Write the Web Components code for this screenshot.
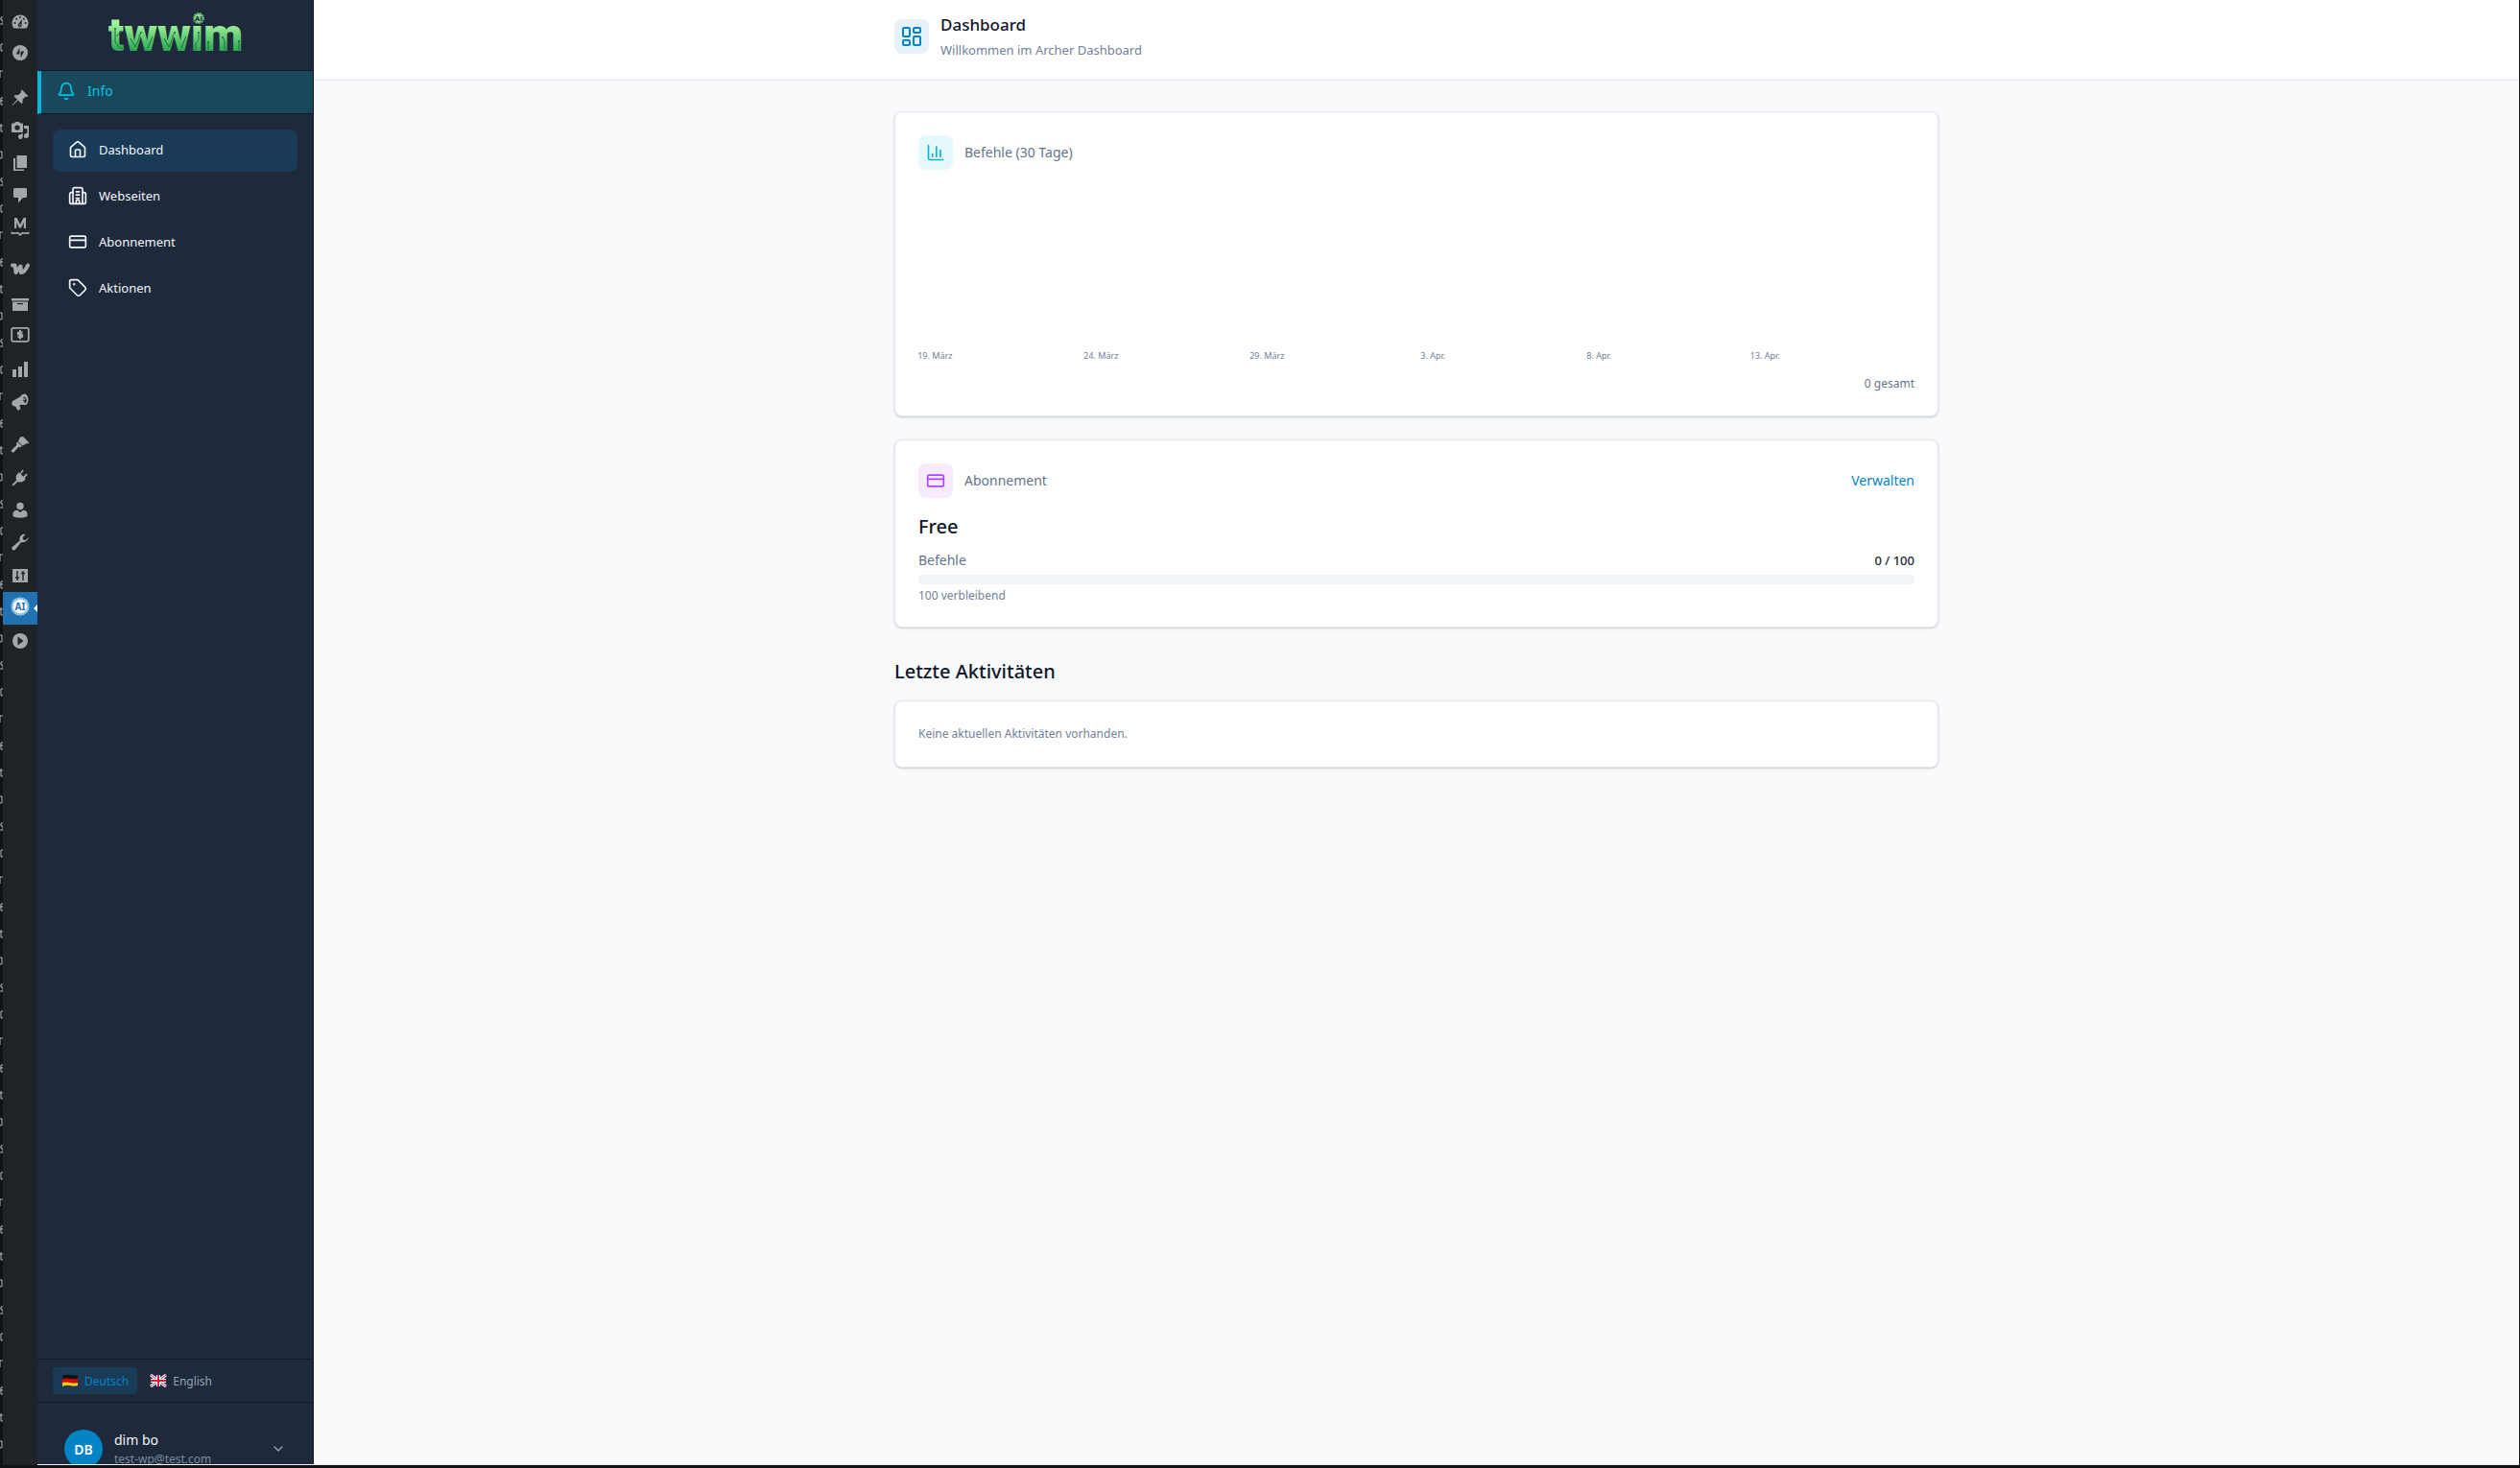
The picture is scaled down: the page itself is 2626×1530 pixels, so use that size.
<!DOCTYPE html>
<html lang="de">
<head>
<meta charset="utf-8">
<title>Dashboard</title>
<style>
	html, body {
		height: 100%;
		margin: 0;
	}
	body {
		font-family: "Noto Sans", "Open Sans", sans-serif;
		background: #111214;
		overflow: hidden;
	}
</style>
</head>
<body>

<archer-app>
	<admin-rail slot="rail"></admin-rail>
	<side-bar slot="sidebar"></side-bar>
	<page-header slot="header" heading="Dashboard" text="Willkommen im Archer Dashboard"></page-header>

	<dash-card icon="chart" heading="Befehle (30 Tage)">
		<command-chart></command-chart>
	</dash-card>
	<dash-card icon="card" heading="Abonnement">
		<a slot="action" href="#abonnement">Verwalten</a>
		<plan-usage plan="Free" used="0" total="100"></plan-usage>
	</dash-card>
	<activity-list></activity-list>
</archer-app>

<script>
// line icons, drawn on a 24 grid
const icons = {
	bell: '<path d="M10.3 21a1.94 1.94 0 0 0 3.4 0"/><path d="M3.3 15.3A1 1 0 0 0 4 17h16a1 1 0 0 0 .7-1.7C19.4 14 18 12.5 18 8A6 6 0 0 0 6 8c0 4.500-1.400 6-2.700 7.300"/>',
	home: '<path d="M15 21v-8a1 1 0 0 0-1-1h-4a1 1 0 0 0-1 1v8"/><path d="M3 10a2 2 0 0 1 .7-1.500l7-6a2 2 0 0 1 2.600 0l7 6A2 2 0 0 1 21 10v9a2 2 0 0 1-2 2H5a2 2 0 0 1-2-2z"/>',
	building: '<path d="M6 22V4a2 2 0 0 1 2-2h8a2 2 0 0 1 2 2v18Z"/><path d="M6 8H4a2 2 0 0 0-2 2v10a2 2 0 0 0 2 2h2"/><path d="M18 8h2a2 2 0 0 1 2 2v10a2 2 0 0 1-2 2h-2"/><path d="M10 7h4M10 11h4M10 15h4"/><path d="M10 22v-3a2 2 0 0 1 4 0v3"/>',
	card: '<rect x="2" y="5" width="20" height="14" rx="2"/><path d="M2 10h20"/>',
	tag: '<path d="M12.600 2.600A2 2 0 0 0 11.200 2H4a2 2 0 0 0-2 2v7.200a2 2 0 0 0 .6 1.400l8.700 8.700a2.400 2.400 0 0 0 3.400 0l6.600-6.600a2.400 2.400 0 0 0 0-3.400z"/><circle cx="7.500" cy="7.500" r=".5" fill="currentColor"/>',
	layout: '<rect x="3" y="3" width="7" height="9" rx="1"/><rect x="14" y="3" width="7" height="5" rx="1"/><rect x="14" y="12" width="7" height="9" rx="1"/><rect x="3" y="16" width="7" height="5" rx="1"/>',
	chart: '<path d="M3 3v16a2 2 0 0 0 2 2h16"/><path d="M18 17V9M13 17V5M8 17v-3"/>',
	chevron: '<path d="m6 9 6 6 6-6"/>'
};

const icon = (name, size = 20, stroke = 2) => `
	<svg width="${size}" height="${size}" viewBox="0 0 24 24" fill="none" stroke="currentColor"
		stroke-width="${stroke}" stroke-linecap="round" stroke-linejoin="round" aria-hidden="true">${icons[name]}</svg>`;

// solid icons of the admin rail, drawn on a 20 grid. null = separator
const railItems = [
	['Dashboard', '<path d="M3.500 16.500A8.500 8.500 0 1 1 16.500 16.500z"/><g fill="#1d2327"><circle cx="4.500" cy="11" r="1"/><circle cx="6.200" cy="6.700" r="1"/><circle cx="10" cy="5" r="1"/><circle cx="13.800" cy="6.700" r="1"/><circle cx="15.500" cy="11" r="1"/><path d="M11.800 7l-.2 6.500a1.900 1.900 0 1 1-3.300-1.500z"/></g><circle cx="10" cy="13" r=".8"/>'],
	['Jetpack', '<circle cx="10" cy="8" r="8"/><path fill="#1d2327" d="M9.400 2.800v6.600H5.800zM10.600 13.200V6.600h3.600z"/>'],
	null,
	['Beiträge', '<path d="M11.800 1.500l6.700 6.700-1.600.7-1.200-.3-3.200 3.200c.4 1.700.2 3.200-.8 4.400L7.800 12.500 2 18l-.5-.5L7 11.700 3.400 8c1.300-.9 2.800-1.100 4.400-.7L11 4.200l-.3-1.300z"/>'],
	['Medien', '<path d="M2 2.500h2L5 1h4l1 1.500h2a1 1 0 0 1 1 1V11a1 1 0 0 1-1 1H2a1 1 0 0 1-1-1V3.500a1 1 0 0 1 1-1z"/><circle cx="7" cy="7" r="2.600" fill="#1d2327"/><path d="M14 5h5v10.500a2.500 2.500 0 1 1-1.700-2.400V8H14zM11 13.300h1.800v3.200a2.400 2.400 0 1 1-1.800-2.300z"/>'],
	['Seiten', '<path d="M6.500 2H17v13H6.500z"/><path d="M3 5h2v11.500h9V18H3z"/>'],
	['Kommentare', '<path d="M4.500 2h11A1.500 1.500 0 0 1 17 3.500v7a1.500 1.500 0 0 1-1.500 1.500H13l-5 5.500V12H4.500A1.500 1.500 0 0 1 3 10.500v-7A1.500 1.500 0 0 1 4.500 2z"/>'],
	['MailPoet', '<path d="M4 10V-1h2.600L10 6l3.400-7H16v11h-2.200V3.800L11 9.500H9L6.200 3.800V10z"/><path d="M.5 13.500c2.500 1.600 5 .2 7 .4 1.400.2 2 .9 2.500 1.800.5-.9 1.100-1.600 2.500-1.800 2-.2 4.500 1.200 7-.4v2c-2.500 1.200-5 .2-7 .4-1.500.2-1.700 2-2.500 2s-1-1.800-2.500-2c-2-.2-4.500.8-7-.4z"/>'],
	null,
	['WooCommerce', '<path fill="none" stroke="currentColor" stroke-width="4" stroke-linejoin="round" stroke-linecap="round" d="M2 3.500h2.500L5.500 11l5-6.500.5 6.500c3 0 5-3 7-7.500"/>'],
	['Produkte', '<path d="M1 4h18v2.500H1zM2 7.500h16V17H2z"/><path fill="#1d2327" d="M7 9h6v1.200H7z"/>'],
	['Zahlungen', '<rect x="1.200" y=".8" width="17.600" height="14" rx="1.500" fill="none" stroke="currentColor" stroke-width="1.800"/><path fill="none" stroke="currentColor" stroke-width="2" d="M12.600 5.400H8.800a1.200 1.200 0 0 0 0 2.400h2.400a1.200 1.200 0 0 1 0 2.400H7.400M10 3v9.500"/>'],
	['Statistiken', '<path d="M2 10h4v8H2zM8 7h4v11H8zM14 2h4v16h-4z"/>'],
	['Marketing', '<path fill-rule="evenodd" d="M10 4.500C12 2 14 .8 16 2c3 2 3.200 7.500 1 10.200-1 1.200-3 .8-5 .5l-2.700.5 1.200 4.300-3 1.200L5 14.500c-2 .3-3.500-.8-3.700-2.700-.2-2 .9-3.300 2.700-3.800zM14 4.500c-1.600 1.600-.8 5.400 1.500 6.500 2-.6 1.600-5.700-1.500-6.500z"/><circle cx="14.300" cy="7" r="1.100"/>'],
	null,
	['Design', '<path d="M13 1l1.800 1.800 3.700 3.700.5 2-2.500-.6-1 1-3.200 1.500L8 6l1.500-3.400 1-1L13 1z"/><path d="M7.500 6.600l4.300 4.300-1.300 1.300-2-.4L3.700 17a1.600 1.600 0 0 1-2.400-2.300l5-4.800-.3-2z"/>'],
	['Plugins', '<path d="M12.500 1.500l1.300 1.300-3.200 3.300 2.700 2.700L16.600 5.500l1.300 1.300-3.300 3.300 1.200 1.200-1.200 1.200c-2 2-4.600 2.700-7 1.500l-4.800 4.500-1.300-1.300 4.700-4.800c-1.200-2.400-.5-5 1.300-7l1.200-1.200 1 1z"/>'],
	['Benutzer', '<circle cx="10" cy="5.500" r="3.700"/><path d="M2.500 16v-2.500c0-2.200 1.800-3.700 4.500-3.700l3 2.200 3-2.200c2.700 0 4.500 1.500 4.500 3.700V16c-3 2.200-12 2.200-15 0z"/>'],
	['Werkzeuge', '<path d="M16.700 7.600c-1.500 1.700-3.700 2-5.600 1.300L5 16.700c-1 1-2.300 1-3.100.1-.8-.8-.7-2 .2-3L9.700 7.500C9 5.500 9.500 3.500 11 2c1.300-1.200 3-1.600 4.600-1.100l-3 3 .5 2.600 2.700.6 3-3c.2 1.200-.9 2.400-2.100 3.500z"/>'],
	['Einstellungen', '<path d="M2 3h16v14H2z"/><path stroke="#1d2327" stroke-width="1.400" fill="none" d="M7 5v10M13 5v10M5 12h4M11 7.500h4"/>'],
	['Archer', '<circle cx="10" cy="8" r="9.500" fill="#b9dcf2"/><circle cx="10" cy="8" r="8.300" fill="none" stroke="#2271b1" stroke-dasharray="1 1"/><circle cx="10" cy="8" r="7" fill="#fff"/><text x="10" y="11.500" text-anchor="middle" font-size="10" font-weight="700" fill="#2271b1">AI</text>', 'current'],
	['Video', '<circle cx="10" cy="10" r="8"/><path fill="#1d2327" d="M7.500 5.500l6 4.500-6 4.500z"/>']
];

class ArcherApp extends HTMLElement {
	connectedCallback() {
		const shadow = this.attachShadow({ mode: "open" });
		shadow.innerHTML = `
			<style>
				:host {
					display: grid;
					grid-template-columns: 3px 36px 288px 1fr;
					height: 100vh;
					box-sizing: border-box;
					padding: 0 1px 3px 0;
				}
				::slotted(admin-rail), .main { min-height: 0; }
				.frame {
					min-height: 0;
					overflow: hidden;
					border-bottom: 1px solid #f0f0f1;
				}
				.main {
					background: #f8fafc;
					overflow: hidden;
					border-bottom: 1px solid #f0e9f1;
				}
				.content {
					display: flex;
					flex-direction: column;
					gap: 24px;
					max-width: 1088px;
					margin: 32px auto;
				}
			</style>
			<edge-strip></edge-strip>
			<slot name="rail"></slot>
			<div class="frame"><slot name="sidebar"></slot></div>
			<div class="main">
				<slot name="header"></slot>
				<main class="content"><slot></slot></main>
			</div>
		`;
	}
}

customElements.define('archer-app', ArcherApp);

// Sliver of the window that lies behind
class EdgeStrip extends HTMLElement {
	connectedCallback() {
		const shadow = this.attachShadow({ mode: "open" });
		const marks = [
			'M3 1H1v3h2v4H0',
			'M3 1H1v7h2',
			'M0 8V1h3',
			'M0 4h3M3 1H1v7h2',
			'M1 0v8h2M0 2h3',
			'M0 1h2v7H0'
		];
		shadow.innerHTML = `
			<style>
				:host {
					display: block;
					min-height: 0;
					overflow: hidden;
				}
				svg { display: block; }
			</style>
			<svg width="3" height="100%" aria-hidden="true">
				<defs>
					<pattern id="marks" width="3" height="168" patternUnits="userSpaceOnUse">
						<g fill="none" stroke="#b9b9b9">${marks.map((d, i) => `<path transform="translate(0 ${i * 28 + 17})" d="${d}"/>`).join('')}</g>
					</pattern>
				</defs>
				<rect width="3" height="100%" fill="url(#marks)"/>
			</svg>
		`;
	}
}

customElements.define('edge-strip', EdgeStrip);

class AdminRail extends HTMLElement {
	connectedCallback() {
		const shadow = this.attachShadow({ mode: "open" });
		shadow.innerHTML = `
			<style>
				:host {
					display: block;
					background: #1d2327;
					color: #a2a7ab;
				}
				nav { padding-top: 6px; }
				a {
					display: flex;
					align-items: center;
					justify-content: center;
					height: 34px;
					color: inherit;
					position: relative;
				}
				svg { overflow: visible; }
				.current { background: #2271b1; }
				.current::after {
					content: "";
					position: absolute;
					right: 0;
					top: 13px;
					border: 4px solid transparent;
					border-left: 0;
					border-right-color: #f0f0f1;
				}
				.separator { height: 11px; }
			</style>
			<nav>${railItems.map(item => item
				? `<a href="#" class="${item[2] || ''}" aria-label="${item[0]}"><svg width="20" height="20" viewBox="0 0 20 20" fill="currentColor">${item[1]}</svg></a>`
				: '<div class="separator"></div>').join('')}
			</nav>
		`;
	}
}

customElements.define('admin-rail', AdminRail);

class BrandLogo extends HTMLElement {
	connectedCallback() {
		const shadow = this.attachShadow({ mode: "open" });
		shadow.innerHTML = `
			<style>
				:host { display: block; }
				svg { display: block; }
			</style>
			<svg width="140" height="46" viewBox="0 0 140 46" role="img" aria-label="twwim">
				<defs>
					<linearGradient id="g" gradientUnits="userSpaceOnUse" x1="0" y1="14" x2="0" y2="44">
						<stop offset="0" stop-color="#a4f59b"/>
						<stop offset="1" stop-color="#25a550"/>
					</linearGradient>
				</defs>
				<text x="70" y="43" text-anchor="middle" font-family="Roboto" font-weight="900" font-size="48" fill="url(#g)">twwim</text>
				<g fill="none" stroke="#1c6b3c">
					<path d="M7 20v14l5 6h3M8 28l4-4"/>
					<path d="M23 30l5 9 4-9v-3l2-3M46 28l-5 12"/>
					<path d="M58 30l5 9 4-9v-3l2-3M81 28l-5 12"/>
					<path d="M91 42v-7l3-3v-8"/>
					<path d="M104 42v-8M119 29l2 3v10M136 42v-9"/>
				</g>
				<g fill="#1c6b3c">
					<circle cx="7" cy="20" r="1"/><circle cx="12" cy="24" r="1"/><circle cx="34" cy="24" r="1"/>
					<circle cx="69" cy="24" r="1"/><circle cx="94" cy="24" r="1"/><circle cx="104" cy="34" r="1"/>
					<circle cx="119" cy="29" r="1"/><circle cx="136" cy="33" r="1"/>
				</g>
				<circle cx="94" cy="9" r="7" fill="#1e293b"/>
				<circle cx="94" cy="9" r="5" fill="#86dc8c" stroke="#5fae74" stroke-width="2" stroke-dasharray="2 1"/>
				<text x="94" y="12" text-anchor="middle" font-family="Roboto" font-weight="900" font-size="8" fill="#1e293b">AI</text>
			</svg>
		`;
	}
}

customElements.define('brand-logo', BrandLogo);

class SideBar extends HTMLElement {
	connectedCallback() {
		const shadow = this.attachShadow({ mode: "open" });
		const links = [
			['home', 'Dashboard'],
			['building', 'Webseiten'],
			['card', 'Abonnement'],
			['tag', 'Aktionen']
		];
		/* the bar runs on below the frame, by the height of the admin bar */
		shadow.innerHTML = `
			<style>
				:host {
					display: flex;
					flex-direction: column;
					height: calc(100% + 32px);
					box-sizing: border-box;
					background: #1e293b;
					border-right: 1px solid #0f172a;
					color: #f1f5f9;
				}
				a { text-decoration: none; color: inherit; }
				svg { flex: none; }
				.brand {
					display: flex;
					justify-content: center;
					padding: 10px 0 17px;
					border-bottom: 1px solid #0f172a;
				}
				.info {
					display: flex;
					align-items: center;
					gap: 12px;
					padding: 10px 16px 12px;
					border-left: 4px solid #00b8db;
					border-bottom: 1px solid #0f172a;
					background: #1a485b;
					color: #00c3e6;
					font-size: 14px;
					line-height: 22px;
				}
				nav {
					display: flex;
					flex-direction: column;
					gap: 4px;
					flex: 1;
					padding: 16px;
				}
				nav a {
					display: flex;
					align-items: center;
					gap: 12px;
					padding: 10px 16px 12px;
					border-radius: 8px;
					font-size: 13px;
					line-height: 22px;
				}
				nav a[aria-current] { background: #193b57; }
				.languages {
					display: flex;
					gap: 4px;
					padding: 8px 16px;
					border-top: 1px solid #0f172a;
					border-bottom: 1px solid #0f172a;
				}
				button {
					display: flex;
					align-items: center;
					font: inherit;
					color: inherit;
					background: none;
					border: 0;
				}
				.languages button {
					gap: 6px;
					height: 28px;
					padding: 0 9px;
					border-radius: 4px;
					font-size: 12px;
					color: #94a3b8;
				}
				.languages .active {
					background: #193b57;
					color: #0284c7;
				}
				.user {
					gap: 12px;
					padding: 28px;
					text-align: left;
				}
				.avatar {
					display: grid;
					place-items: center;
					width: 40px;
					height: 40px;
					border-radius: 50%;
					background: #0284c7;
					color: #fff;
					font-size: 14px;
					font-weight: 600;
				}
				.who { flex: 1; }
				.name { display: block; font-size: 14px; line-height: 22px; }
				.mail { display: block; font-size: 12px; line-height: 18px; color: #7b899d; }
				.user svg { color: #94a3b8; }
			</style>
			<div class="brand"><brand-logo></brand-logo></div>
			<a class="info" href="#info">${icon('bell')}Info</a>
			<nav>${links.map(([name, text], i) => `
				<a href="#${name}" ${i === 0 ? 'aria-current="page"' : ''}>${icon(name)}${text}</a>`).join('')}
			</nav>
			<div class="languages">
				<button class="active" type="button">
					<svg width="18" height="14" viewBox="0 0 18 14" aria-hidden="true">
						<path fill="#111" d="M1 2q4-2 8-1t8 0v4H1z"/>
						<path fill="#d00" d="M1 5q4-1 8 0t8 0v4H1z"/>
						<path fill="#ffce00" d="M1 9q4-1 8 0t8 0v3q-4 1-8 0t-8 1z"/>
					</svg>
					Deutsch
				</button>
				<button type="button">
					<svg width="18" height="14" viewBox="0 0 18 14" aria-hidden="true">
						<path fill="#1a2f7a" d="M1 1h16v12H1z"/>
						<path stroke="#fff" stroke-width="3" d="M1 1l16 12M17 1L1 13"/>
						<path stroke="#d4213d" d="M1 1l16 12M17 1L1 13"/>
						<path stroke="#fff" stroke-width="4" d="M9 1v12M1 7h16"/>
						<path stroke="#d4213d" stroke-width="2" d="M9 1v12M1 7h16"/>
					</svg>
					English
				</button>
			</div>
			<button class="user" type="button">
				<span class="avatar">DB</span>
				<span class="who"><span class="name">dim bo</span><span class="mail">test-wp@test.com</span></span>
				${icon('chevron', 16)}
			</button>
		`;
	}
}

customElements.define('side-bar', SideBar);

class IconTile extends HTMLElement {
	connectedCallback() {
		const shadow = this.attachShadow({ mode: "open" });
		const name = this.getAttribute('name');
		shadow.innerHTML = `
			<style>
				:host {
					display: grid;
					place-items: center;
					flex: none;
					width: 36px;
					height: 36px;
					border-radius: 8px;
				}
				:host([name="layout"]) { background: #e6f2f9; color: #0284c7; }
				:host([name="chart"]) { background: #e5f8fb; color: #00b8db; }
				:host([name="card"]) { background: #f6ebff; color: #ad46ff; }
			</style>
			${icon(name, name === 'layout' ? 24 : 20)}
		`;
	}
}

customElements.define('icon-tile', IconTile);

class PageHeader extends HTMLElement {
	connectedCallback() {
		const shadow = this.attachShadow({ mode: "open" });
		shadow.innerHTML = `
			<style>
				:host {
					display: block;
					background: #fff;
					border-bottom: 1px solid #e2e8f0;
				}
				header {
					display: flex;
					align-items: center;
					gap: 12px;
					max-width: 1088px;
					margin: 0 auto;
					padding: 12px 0 19px;
				}
				h1 {
					margin: 0;
					color: #0f172a;
					font-size: 17px;
					font-weight: 500;
					line-height: 28px;
				}
				p {
					margin: 0;
					color: #71809a;
					font-size: 13px;
					line-height: 24px;
				}
			</style>
			<header>
				<icon-tile name="layout"></icon-tile>
				<div>
					<h1>${this.getAttribute('heading')}</h1>
					<p>${this.getAttribute('text')}</p>
				</div>
			</header>
		`;
	}
}

customElements.define('page-header', PageHeader);

class DashCard extends HTMLElement {
	connectedCallback() {
		const shadow = this.attachShadow({ mode: "open" });
		const heading = this.getAttribute('heading');
		shadow.innerHTML = `
			<style>
				:host {
					display: block;
					padding: 24px;
					background: #fff;
					border: 1px solid #e2e8f0;
					border-radius: 8px;
					box-shadow: 0 1px 3px rgba(0, 0, 0, .1), 0 1px 2px rgba(0, 0, 0, .1);
				}
				header {
					display: flex;
					align-items: center;
					gap: 12px;
				}
				h2 {
					flex: 1;
					margin: 0;
					padding-bottom: 2px;
					color: #64748b;
					font-size: 14px;
					font-weight: 400;
				}
				::slotted(a) {
					padding-bottom: 2px;
					color: #0284c7;
					font-size: 14px;
					text-decoration: none;
				}
			</style>
			${heading ? `
			<header>
				<icon-tile name="${this.getAttribute('icon')}"></icon-tile>
				<h2>${heading}</h2>
				<slot name="action"></slot>
			</header>` : ''}
			<slot></slot>
		`;
	}
}

customElements.define('dash-card', DashCard);

class CommandChart extends HTMLElement {
	connectedCallback() {
		const shadow = this.attachShadow({ mode: "open" });
		const labels = ['19. März', '24. März', '29. März', '3. Apr.', '8. Apr.', '13. Apr.'];
		// one column a day, every fifth is labelled
		const days = Array.from({ length: 30 }, (_, i) => i % 5 === 0 ? labels[i / 5] : '');
		shadow.innerHTML = `
			<style>
				:host { display: block; padding-top: 16px; }
				.bars { height: 170px; }
				.days {
					display: grid;
					grid-template-columns: repeat(30, 1fr);
					color: #71809a;
					font-size: 9px;
					line-height: 16px;
				}
				.days span {
					display: flex;
					justify-content: center;
					min-width: 0;
					white-space: nowrap;
				}
				p {
					margin: 12px 0 0;
					color: #64748b;
					font-size: 12px;
					line-height: 18px;
					text-align: right;
				}
			</style>
			<div class="bars"></div>
			<div class="days">${days.map(day => `<span>${day}</span>`).join('')}</div>
			<p>0 gesamt</p>
		`;
	}
}

customElements.define('command-chart', CommandChart);

class PlanUsage extends HTMLElement {
	connectedCallback() {
		const shadow = this.attachShadow({ mode: "open" });
		const used = Number(this.getAttribute('used'));
		const total = Number(this.getAttribute('total'));
		shadow.innerHTML = `
			<style>
				:host { display: block; padding-top: 16px; }
				h3 {
					margin: 0 0 12px;
					color: #0f172a;
					font-size: 20px;
					font-weight: 500;
					line-height: 28px;
				}
				.row {
					display: flex;
					justify-content: space-between;
					font-size: 14px;
					line-height: 18px;
					color: #64748b;
				}
				.value { color: #1e293b; font-size: 13px; font-weight: 500; }
				.track {
					height: 10px;
					margin: 6px 0 4px;
					border-radius: 5px;
					background: #f1f5f9;
				}
				.fill {
					height: 100%;
					width: ${used / total * 100}%;
					border-radius: inherit;
					background: #0284c7;
				}
				p {
					margin: 0;
					color: #71809a;
					font-size: 12px;
					line-height: 16px;
				}
			</style>
			<h3>${this.getAttribute('plan')}</h3>
			<div class="row"><span>Befehle</span><span class="value">${used} / ${total}</span></div>
			<div class="track"><div class="fill"></div></div>
			<p>${total - used} verbleibend</p>
		`;
	}
}

customElements.define('plan-usage', PlanUsage);

class ActivityList extends HTMLElement {
	connectedCallback() {
		const shadow = this.attachShadow({ mode: "open" });
		shadow.innerHTML = `
			<style>
				:host { display: block; padding-top: 8px; }
				h2 {
					margin: 0 0 16px;
					color: #0f172a;
					font-size: 20px;
					font-weight: 500;
					line-height: 28px;
				}
				p {
					margin: 0;
					color: #71809a;
					font-size: 12px;
					line-height: 20px;
				}
			</style>
			<h2>Letzte Aktivitäten</h2>
			<dash-card><p>Keine aktuellen Aktivitäten vorhanden.</p></dash-card>
		`;
	}
}

customElements.define('activity-list', ActivityList);
</script>
</body>
</html>
